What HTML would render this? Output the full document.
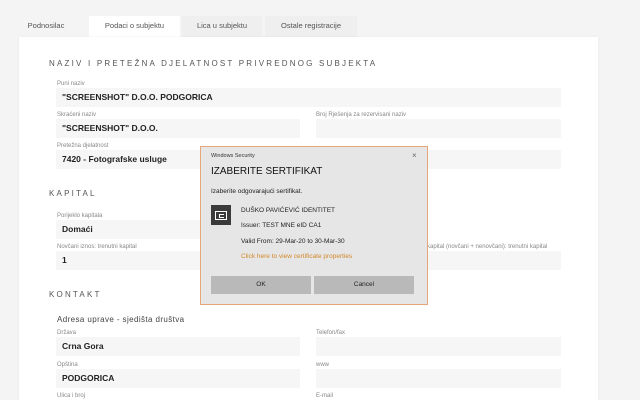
<!DOCTYPE html>
<html><head><meta charset="utf-8"><style>
*{margin:0;padding:0;box-sizing:border-box}
html,body{width:640px;height:400px;overflow:hidden}
body{background:#f4f4f4;font-family:"Liberation Sans",sans-serif;position:relative}
.a{position:absolute}
.tab{position:absolute;top:16px;height:21px;font-size:7.5px;color:#555;text-align:center;line-height:19px;background:#efefef}
.panel{position:absolute;left:19px;top:37px;width:579px;height:380px;background:#fff;box-shadow:0 0 3px rgba(0,0,0,.05)}
.h{position:absolute;font-size:8px;letter-spacing:2.2px;color:#555}
.lb{position:absolute;font-size:6px;color:#888}
.in{position:absolute;background:#f6f6f6;height:19px;font-size:8.5px;font-weight:bold;color:#222;padding-left:6px;line-height:19px}
.dlg{position:absolute;left:200px;top:146px;width:228px;height:159px;background:#e6e6e6;border:1px solid #e6a67a;font-size:6.5px;color:#222}
.btn{position:absolute;top:129px;width:100px;height:18px;background:#b9b9b9;text-align:center;line-height:18px;font-size:6.5px}
</style></head><body>
<div class="tab" style="left:20px;width:52px;background:transparent">Podnosilac</div>
<div class="tab" style="left:89px;width:91px;background:#fff">Podaci o subjektu</div>
<div class="tab" style="left:182px;width:80px">Lica u subjektu</div>
<div class="tab" style="left:265px;width:92px">Ostale registracije</div>
<div class="panel"></div>
<div class="h" style="left:49px;top:59px">NAZIV I PRETEŽNA DJELATNOST PRIVREDNOG SUBJEKTA</div>
<div class="lb" style="left:57px;top:81px">Puni naziv</div>
<div class="in" style="left:56px;top:88px;width:505px">"SCREENSHOT" D.O.O. PODGORICA</div>
<div class="lb" style="left:57px;top:112px">Skraćeni naziv</div>
<div class="in" style="left:56px;top:119px;width:244px">"SCREENSHOT" D.O.O.</div>
<div class="lb" style="left:316px;top:112px">Broj Rješenja za rezervisani naziv</div>
<div class="in" style="left:316px;top:119px;width:245px"></div>
<div class="lb" style="left:57px;top:143px">Pretežna djelatnost</div>
<div class="in" style="left:56px;top:150px;width:505px">7420 - Fotografske usluge</div>
<div class="h" style="left:49px;top:189px">KAPITAL</div>
<div class="lb" style="left:57px;top:213px">Porijeklo kapitala</div>
<div class="in" style="left:56px;top:220px;width:244px">Domaći</div>
<div class="lb" style="left:57px;top:244px">Novčani iznos: trenutni kapital</div>
<div class="in" style="left:56px;top:251px;width:244px">1</div>
<div class="lb" style="left:427px;top:244px">kapital (novčani + nenovčani): trenutni kapital</div>
<div class="in" style="left:316px;top:251px;width:245px"></div>
<div class="h" style="left:49px;top:290px">KONTAKT</div>
<div class="a" style="left:57px;top:315px;font-size:8px;color:#444;letter-spacing:.4px">Adresa uprave - sjedišta društva</div>
<div class="lb" style="left:57px;top:330px">Država</div>
<div class="in" style="left:56px;top:337px;width:244px">Crna Gora</div>
<div class="lb" style="left:316px;top:330px">Telefon/fax</div>
<div class="in" style="left:316px;top:337px;width:245px"></div>
<div class="lb" style="left:57px;top:362px">Opština</div>
<div class="in" style="left:56px;top:369px;width:244px">PODGORICA</div>
<div class="lb" style="left:316px;top:362px">www</div>
<div class="in" style="left:316px;top:369px;width:245px"></div>
<div class="lb" style="left:57px;top:393px">Ulica i broj</div>
<div class="lb" style="left:316px;top:393px">E-mail</div>
<div class="dlg">
<div class="a" style="left:10px;top:6px;font-size:5.5px;color:#333">Windows Security</div>
<div class="a" style="left:211px;top:4px;font-size:8px;color:#666">×</div>
<div class="a" style="left:10px;top:19px;font-size:10px;color:#111">IZABERITE SERTIFIKAT</div>
<div class="a" style="left:10px;top:41px">Izaberite odgovarajući sertifikat.</div>
<div class="a" style="left:10px;top:58px;width:20px;height:20px;background:#3a3a3a"><div class="a" style="left:4px;top:6px;width:12px;height:9px;border:1.3px solid #fff"></div><div class="a" style="left:8px;top:8.5px;width:5px;height:4px;border:1px solid #fff;border-right:none"></div></div>
<div class="a" style="left:40px;top:60px">DUŠKO PAVIĆEVIĆ IDENTITET</div>
<div class="a" style="left:40px;top:75px">Issuer: TEST MNE eID CA1</div>
<div class="a" style="left:40px;top:91px">Valid From: 29-Mar-20 to 30-Mar-30</div>
<div class="a" style="left:40px;top:106px;color:#d2882a">Click here to view certificate properties</div>
<div class="btn" style="left:10px">OK</div>
<div class="btn" style="left:113px">Cancel</div>
</div>
</body></html>
